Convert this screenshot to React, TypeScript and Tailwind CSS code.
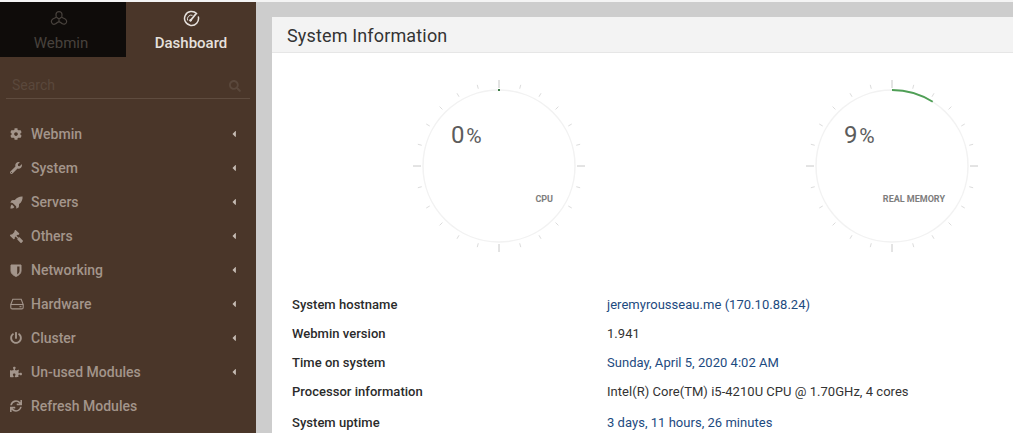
import React from "react";
import { FaCog, FaWrench, FaGavel, FaPowerOff, FaPuzzlePiece, FaSync, FaSearch, FaCaretLeft } from "react-icons/fa";

function RocketIcon() {
  return (
    <svg width="13" height="13" viewBox="0 0 13 13" fill="currentColor">
      <path d="M12.6.4C9.4.2 6.8 1.4 4.9 3.9L1.8 4.2.2 6.6l2.5.3 3.4 3.4.3 2.5 2.4-1.6.3-3.1C11.6 6.2 12.8 3.6 12.6.4z" />
      <path d="M2 8.6c-1 .5-1.5 1.7-1.6 3.9 2.2-.1 3.4-.6 3.9-1.6z" />
    </svg>
  );
}
function ShieldIcon() {
  return (
    <svg width="12" height="13" viewBox="0 0 12 13" fill="none">
      <path d="M1 1h10v6c0 2.6-2.4 4.4-5 5.4C3.4 11.4 1 9.6 1 7z" fill="currentColor" stroke="currentColor" />
      <path d="M7.2 2.6h2.3v4.5c0 1.5-1 2.6-2.3 3.3z" fill="#4a3629" />
    </svg>
  );
}
function HddIcon() {
  return (
    <svg width="14" height="12" viewBox="0 0 14 12" fill="none" stroke="currentColor" strokeWidth="1.1">
      <path d="M.8 6.5 2.8 1.2h8.4l2 5.3v3a1.4 1.4 0 0 1-1.4 1.4H2.2A1.4 1.4 0 0 1 .8 9.500z" />
      <path d="M.8 6.500h12.400" />
      <path d="M9.500 8.700h2" />
    </svg>
  );
}

const nav = [
  { label: "Webmin", icon: <FaCog size={12} />, caret: true },
  { label: "System", icon: <FaWrench size={12} />, caret: true },
  { label: "Servers", icon: <RocketIcon />, caret: true },
  { label: "Others", icon: <FaGavel size={13} className="-scale-x-100" />, caret: true },
  { label: "Networking", icon: <ShieldIcon />, caret: true },
  { label: "Hardware", icon: <HddIcon />, caret: true },
  { label: "Cluster", icon: <FaPowerOff size={12} />, caret: true },
  { label: "Un-used Modules", icon: <FaPuzzlePiece size={12} />, caret: true },
  { label: "Refresh Modules", icon: <FaSync size={12} />, caret: false },
];

const rows = [
  { k: "System hostname", v: "jeremyrousseau.me (170.10.88.24)", link: true, h: "h-[29px]" },
  { k: "Webmin version", v: "1.941", link: false, h: "h-[29px]" },
  { k: "Time on system", v: "Sunday, April 5, 2020 4:02 AM", link: true, h: "h-[29px]" },
  { k: "Processor information", v: "Intel(R) Core(TM) i5-4210U CPU @ 1.70GHz, 4 cores", link: false, h: "h-[30px]" },
  { k: "System uptime", v: "3 days, 11 hours, 26 minutes", link: true, h: "h-[32px]" },
];

function Gauge({ value, label, labelRight }: { value: number; label: string; labelRight: number }) {
  const cx = 100, cy = 100, r = 76;
  const ticks = Array.from({ length: 24 }, (_, i) => {
    const a = (i * 15 * Math.PI) / 180;
    const major = i % 6 === 0;
    const r1 = major ? 78 : 80;
    const r2 = major ? 86 : 84;
    return {
      x1: cx + r1 * Math.sin(a), y1: cy - r1 * Math.cos(a),
      x2: cx + r2 * Math.sin(a), y2: cy - r2 * Math.cos(a), major,
    };
  });
  const end = (value * 3.6 * Math.PI) / 180;
  return (
    <div className="relative w-[200px] h-[200px]">
      <svg width="200" height="200" viewBox="0 0 200 200">
        <circle cx={cx} cy={cy} r={r} fill="none" stroke="#f2f2f2" strokeWidth="1.5" />
        {ticks.map((t, i) => (
          <line key={i} x1={t.x1} y1={t.y1} x2={t.x2} y2={t.y2} stroke={t.major ? "#c8c8c8" : "#dcdcdc"} strokeWidth="1" />
        ))}
        {value > 0 ? (
          <path d={`M ${cx} ${cy - r} A ${r} ${r} 0 0 1 ${cx + r * Math.sin(end)} ${cy - r * Math.cos(end)}`} fill="none" stroke="#4f9f56" strokeWidth="1.8" />
        ) : (
          <rect x={cx - 1} y={cy - r - 1} width="2" height="2" fill="#3c7a44" />
        )}
      </svg>
      <div className="absolute left-[52px] top-[54px] flex items-baseline text-[#5c5c5c] leading-[30px]">
        <span className="text-[24px] tracking-[0.8px]">{value}</span>
        <span className="text-[21px] ml-[1px]">%</span>
      </div>
      <div className="absolute top-[126px] text-[9px] font-bold text-[#7d7d7d] whitespace-nowrap leading-[14px]" style={{ right: labelRight }}>
        {label}
      </div>
    </div>
  );
}

function WebminLogo() {
  return (
    <svg width="18" height="17" viewBox="0 0 18 16" fill="none" stroke="#48423d" strokeWidth="1.2" className="-ml-[8px]">
      <path d="M9 1.2c-1.800 0-3 1.200-3 2.800 0 .9.2 1.600.1 2.400C5.900 7.500 4.600 7.600 3.200 8.300 1.500 9.200 .9 10.900 1.700 12.300c.8 1.400 2.500 1.800 3.900 1 1.200-.6 2-1.700 3.400-2.200 1.400.5 2.200 1.600 3.400 2.200 1.400.8 3.100.4 3.900-1 .8-1.400.2-3.100-1.500-4-1.400-.7-2.700-.8-2.900-1.900-.1-.8.1-1.500.1-2.400 0-1.600-1.200-2.800-3-2.800z" />
      <path d="M6.200 6.500 9 8.400l2.800-1.900M9 8.400v2.700" />
    </svg>
  );
}

function DashIcon() {
  return (
    <svg width="17" height="17" viewBox="0 0 17 17" fill="none" stroke="#e6e1dd" strokeWidth="1.5">
      <path d="M13.600 3.600A7 7 0 1 0 15.400 7" strokeLinecap="round" />
      <path d="M4.700 10.500A3.900 3.900 0 0 1 9.500 5.300" strokeWidth="1" />
      <path d="M7.400 10.600 12.600 4.200" strokeWidth="1.800" strokeLinecap="round" />
      <circle cx="7.600" cy="10.200" r="1.200" fill="#e6e1dd" stroke="none" />
    </svg>
  );
}

export default function App() {
  return (
    <div className="w-[1013px] h-[433px] overflow-hidden flex flex-col bg-[#cdcdcd] font-['Roboto',sans-serif]">
      <div className="h-[2px] shrink-0 bg-[#f4f4f4]" />
      <div className="flex flex-1 min-h-0">
        <aside className="w-[256px] h-full shrink-0 bg-[#4a3629] flex flex-col">
          <div className="flex h-[55px] shrink-0">
            <div className="w-[126px] bg-[#0f0c0a] flex flex-col items-center pt-[8px]">
              <WebminLogo />
              <span className="text-[15px] leading-[18px] mt-[7px] -ml-[4px] text-[#48423d]">Webmin</span>
            </div>
            <div className="flex-1 flex flex-col items-center pt-[8px]">
              <DashIcon />
              <span className="text-[15px] leading-[18px] mt-[7px] text-[#e6e1dd] font-medium">Dashboard</span>
            </div>
          </div>
          <div className="mx-[6px] mt-[18px] h-[24px] border-b border-[#5f4c3f] flex items-center justify-between pl-[6px] pr-[9px] pb-[2px] shrink-0">
            <span className="text-[14px] text-[#5a483c]">Search</span>
            <FaSearch size={12} className="text-[#5a483c]" />
          </div>
          <nav className="mt-[18px] flex flex-col">
            {nav.map((n) => (
              <div key={n.label} className="h-[34px] flex items-center pl-[10px] pr-[17px] text-[#a3958b]">
                <span className="w-[21px] flex items-center shrink-0">{n.icon}</span>
                <span className="flex-1 text-[14px] font-medium">{n.label}</span>
                {n.caret && <FaCaretLeft size={10} className="text-[#c5bbb3]" />}
              </div>
            ))}
          </nav>
        </aside>
        <main className="flex-1 pt-[15px] pl-[16px]">
          <section className="bg-white h-[500px]">
            <header className="h-[36px] bg-[#f3f3f3] border-b border-[#e6e6e6] pl-[15px] pt-[2px] flex items-center text-[18px] text-[#333333] tracking-[0.15px]">
              System Information
            </header>
            <div className="flex pl-[127px] pt-[13px] gap-[193px] h-[235px]">
              <Gauge value={0} label="CPU" labelRight={46} />
              <Gauge value={9} label="REAL MEMORY" labelRight={47} />
            </div>
            <div className="pl-[20px] pt-[2px] text-[13px] tracking-[0.03px]">
              {rows.map((r) => (
                <div key={r.k} className={`flex items-center ${r.h}`}>
                  <span className="w-[315px] font-medium text-[#2b2b2b]">{r.k}</span>
                  <span className={r.link ? "text-[#1d4a80]" : "text-[#333333]"}>{r.v}</span>
                </div>
              ))}
            </div>
          </section>
        </main>
      </div>
    </div>
  );
}
